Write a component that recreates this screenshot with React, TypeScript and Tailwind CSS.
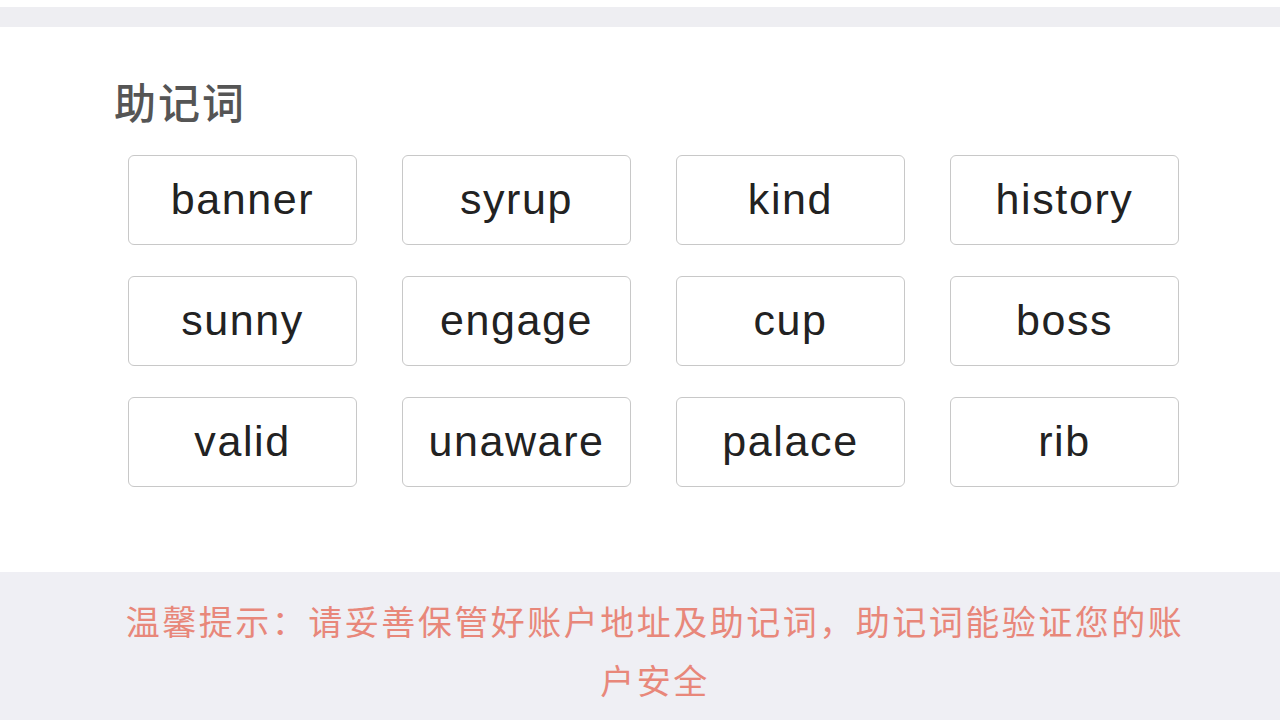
import React from "react";

const words = [
  "banner", "syrup", "kind", "history",
  "sunny", "engage", "cup", "boss",
  "valid", "unaware", "palace", "rib",
];

export default function App() {
  return (
    <div
      className="w-[1280px] h-[720px] bg-white flex flex-col overflow-hidden"
      style={{ fontFamily: '"Liberation Sans", "Noto Sans CJK SC", sans-serif' }}
    >
      <div className="h-[7px] bg-white" />
      <div className="h-[20px] bg-[#eeeef2]" />
      <div className="flex-1 flex flex-col">
        <div
          className="pl-[114px] pt-[49px] text-[42px] leading-[50px] tracking-[2px] font-medium text-[#555555]"
          style={{ fontFamily: '"Noto Sans CJK SC", sans-serif' }}
        >
          助记词
        </div>
        <div className="ml-[128px] mt-[29px] grid grid-cols-[repeat(4,229px)] gap-x-[45px] gap-y-[31px]">
          {words.map((w) => (
            <div
              key={w}
              className="h-[90px] rounded-[6px] border-[1.5px] border-[#c8c8c8] flex items-center justify-center text-[43px] tracking-[1.6px] text-[#222222] pb-[2px]"
            >
              {w}
            </div>
          ))}
        </div>
      </div>
      <div className="h-[148px] bg-[#efeff4] flex justify-center pt-[19px] pl-[30px]">
        <div
          className="w-[1070px] text-center text-[34px] leading-[59px] tracking-[2.5px] text-[#e8877a]"
          style={{ fontFamily: '"Noto Sans CJK SC", sans-serif' }}
        >
          温馨提示：请妥善保管好账户地址及助记词，助记词能验证您的账户安全
        </div>
      </div>
    </div>
  );
}
